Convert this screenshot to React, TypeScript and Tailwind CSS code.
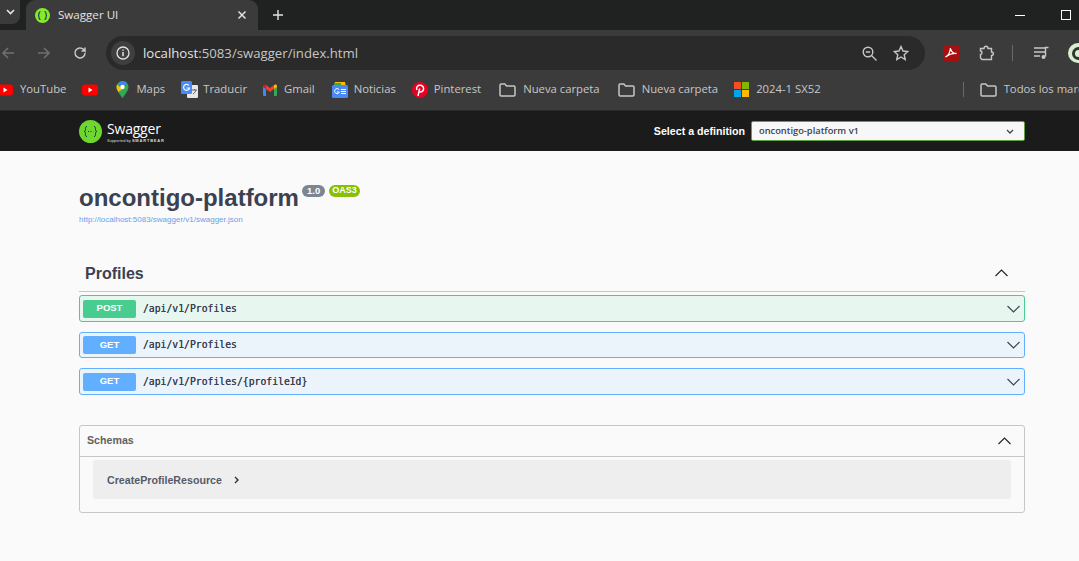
import React from "react";

const Folder = () => (
  <svg width="17" height="14" viewBox="0 0 17 14" fill="none" stroke="#c4c7c5" strokeWidth="1.5"><path d="M1 2.2c0-.7.5-1.2 1.2-1.2h3.6l1.8 2h7.2c.7 0 1.2.5 1.2 1.2v7.6c0 .7-.5 1.2-1.2 1.2H2.2c-.7 0-1.2-.5-1.2-1.2z" /></svg>
);

const YT = () => (
  <svg width="16" height="12" viewBox="0 0 16 12"><rect width="16" height="11" y="0.5" rx="3" fill="#f00" /><path d="M6.5 3.5v5l4-2.5z" fill="#fff" /></svg>
);

const Chevron = ({ up }: { up?: boolean }) => (
  <svg width="13" height="8" viewBox="0 0 13 8" fill="none" stroke={up ? "#222" : "#3b4151"} strokeWidth="1.1"><path d={up ? "M.5 7 6.5 1l6 6" : "M.5 1l6 6 6-6"} /></svg>
);

function Op({ method, path, tint, short }: { method: string; path: string; tint: "post" | "get"; short?: boolean }) {
  const post = tint === "post";
  return (
    <div className={`flex items-center rounded-[3px] border pl-[3px] pr-[4px] ${short ? "h-[26px]" : "h-[27px]"} ${post ? "border-[#49cc90] bg-[#e8f6f0]" : "border-[#61affe] bg-[#ebf3fb]"}`}>
      <div className={`flex h-[18px] w-[53px] items-center justify-center rounded-[2px] text-[9.5px] font-bold text-white ${post ? "bg-[#49cc90]" : "bg-[#61affe]"}`}>{method}</div>
      <div className="ml-[7px] flex-1 pt-[1px] font-['DejaVu_Sans_Mono',monospace] text-[9.75px] text-[#3b4151] [text-shadow:0_0_0.5px_#3b4151]">{path}</div>
      <Chevron />
    </div>
  );
}

const Mark = ({ ml, children }: { ml: string; children: React.ReactNode }) => (
  <div className={`flex shrink-0 items-center whitespace-nowrap ${ml}`}>{children}</div>
);

export default function App() {
  return (
    <div className="flex h-[561px] w-[1079px] flex-col overflow-hidden bg-[#fafafa] font-['Liberation_Sans',sans-serif]">
      {/* Tab strip */}
      <div className="flex h-[30px] shrink-0 items-center bg-[#202221] font-['Open_Sans',sans-serif]">
        <div className="flex h-[24px] w-[20px] items-center justify-center self-start rounded-br-[8px] bg-[#3b3b3b]">
          <svg width="9" height="6" viewBox="0 0 9 6" fill="none" stroke="#e3e3e3" strokeWidth="1.6"><path d="m1 1 3.500 3.500L8 1" /></svg>
        </div>
        <div className="ml-[6px] flex h-[30px] w-[232px] items-center rounded-t-[9px] bg-[#3b3b3b] pl-[9px] pr-[11px]">
          <svg width="15" height="15" viewBox="0 0 15 15" className="shrink-0"><circle cx="7.500" cy="7.500" r="7.500" fill="#85ea2d" /><path d="M5.500 3.500c-1.500 0-1.500 1-1.500 2s-.2 2-1 2c.8 0 1 1 1 2s0 2 1.500 2M9.500 3.500c1.500 0 1.500 1 1.500 2s.2 2 1 2c-.8 0-1 1-1 2s0 2-1.500 2" fill="none" stroke="#173647" strokeWidth="1.200" /></svg>
          <span className="ml-[8px] flex-1 text-[11.600px] text-[#e3e3e3]">Swagger UI</span>
          <svg width="10" height="10" viewBox="0 0 10 10" stroke="#e3e3e3" strokeWidth="1.500"><path d="m1.500 1.500 7 7m0-7-7 7" /></svg>
        </div>
        <svg width="12" height="12" viewBox="0 0 12 12" stroke="#e3e3e3" strokeWidth="1.400" className="ml-[14px]"><path d="M6 1v10M1 6h10" /></svg>
        <div className="ml-auto flex items-center">
          <div className="h-px w-[10px] bg-white" />
          <div className="ml-[36px] mr-[8px] h-[10px] w-[10px] border border-white" />
        </div>
      </div>

      {/* Toolbar */}
      <div className="flex h-[40px] shrink-0 items-start bg-[#3b3b3b] pt-[6px]">
        <div className="flex h-[34px] shrink-0 items-center">
          <svg width="14" height="14" viewBox="0 0 14 14" fill="none" stroke="#6f7170" strokeWidth="1.500" className="ml-[1px]"><path d="M13 7H2m5-5L2 7l5 5" /></svg>
          <svg width="14" height="14" viewBox="0 0 14 14" fill="none" stroke="#6f7170" strokeWidth="1.500" className="ml-[22px]"><path d="M1 7h11M7 2l5 5-5 5" /></svg>
          <svg width="14" height="14" viewBox="0 0 14 14" fill="none" stroke="#c7c7c7" strokeWidth="1.500" className="ml-[22px]"><path d="M12 7a5 5 0 1 1-1.500-3.600L12 5V1.500M12 5H8.500" /></svg>
        </div>
        <div className="ml-[19px] flex h-[34px] w-[819px] shrink-0 items-center rounded-full bg-[#2a2a2a] pr-[16px]">
          <div className="ml-[5px] flex h-[24px] w-[24px] items-center justify-center rounded-full bg-[#3f3f3f]">
            <svg width="14" height="14" viewBox="0 0 14 14" fill="none"><circle cx="7" cy="7" r="6" stroke="#e3e3e3" strokeWidth="1.300" /><path d="M7 6v4.200M7 3.500v1.300" stroke="#e3e3e3" strokeWidth="1.500" /></svg>
          </div>
          <span className="ml-[8px] flex-1 pt-[1px] font-['Open_Sans',sans-serif] text-[13.200px] text-[#e3e3e3]">localhost<span className="text-[#c4c7c5]">:5083/swagger/index.html</span></span>
          <svg width="15" height="15" viewBox="0 0 15 15" fill="none" stroke="#c7c7c7" strokeWidth="1.400"><circle cx="6" cy="6" r="4.800" /><path d="M3.800 6h4.400M9.500 9.500l5 5" /></svg>
          <svg width="16" height="16" viewBox="0 0 16 16" fill="none" stroke="#c7c7c7" strokeWidth="1.400" className="ml-[16px]"><path d="m8 1.500 2 4.500 4.800.5-3.600 3.200 1 4.800L8 12l-4.200 2.500 1-4.800L1.200 6.500 6 6z" /></svg>
        </div>
        <div className="flex h-[34px] shrink-0 items-center">
          <svg width="16" height="16" viewBox="0 0 16 16" className="ml-[18px]"><rect width="16" height="16" rx="2" fill="#a80f0f" /><path d="M2.500 12c2.500-1 4.500-4.500 5-9 .5 3.500 2.500 5.500 6 5.500-3.500-.5-7 .5-11 3.500z" fill="none" stroke="#fff" strokeWidth="1.300" /></svg>
          <svg width="16" height="16" viewBox="0 0 16 16" fill="none" stroke="#c7c7c7" strokeWidth="1.400" className="ml-[20px]"><path d="M1.500 3.500h3.500c0-3 4-3 4 0h3.500v3.500c2.500 0 2.500 3.500 0 3.500v4h-9.500l-1.500-1.500v-3.500c2 0 2-3.500 0-3.500z" /></svg>
          <div className="ml-[17px] h-[16px] w-px bg-[#6a6a6a]" />
          <svg width="16" height="14" viewBox="0 0 16 14" fill="none" stroke="#c7c7c7" strokeWidth="1.400" className="ml-[21px]"><path d="M0 2h11M0 6h11M0 10h6M14.500 1.500h-3v9" /><circle cx="9.500" cy="11" r="2" fill="#c7c7c7" stroke="none" /></svg>
          <div className="ml-[18px] flex h-[20px] w-[20px] shrink-0 items-center justify-center rounded-full bg-[#dcecd2]">
            <div className="h-[13px] w-[13px] rounded-full border-[3px] border-[#2a3a2a]" />
          </div>
        </div>
      </div>

      {/* Bookmarks */}
      <div className="flex h-[40px] shrink-0 items-center bg-[#3b3b3b] pb-[1px] font-['Open_Sans',sans-serif] text-[11.300px] text-[#c7c7c7]">
        <Mark ml="ml-[-3px]"><YT /><span className="ml-[7px]">YouTube</span></Mark>
        <Mark ml="ml-[16px]"><YT /></Mark>
        <Mark ml="ml-[18px]">
          <svg width="13" height="17" viewBox="0 0 13 17"><path d="M6.500 0A6 6 0 0 0 .5 6c0 4 6 11 6 11s6-7 6-11a6 6 0 0 0-6-6z" fill="#34a853" /><path d="M1 3.500 6.500 8l-4 3C1 9 .5 7.500.5 6c0-1 .2-1.700.5-2.500z" fill="#fbbc04" /><path d="M6.500 0c2 0 3.800 1 4.800 2.500L6.500 6 2 3A6 6 0 0 1 6.500 0z" fill="#4285f4" /><circle cx="6.500" cy="6" r="2.200" fill="#fff" /></svg>
          <span className="ml-[7px]">Maps</span>
        </Mark>
        <Mark ml="ml-[16px]">
          <svg width="17" height="17" viewBox="0 0 17 17"><rect x="6" y="4" width="11" height="13" rx="1" fill="#e8e8e8" /><rect width="11" height="13" rx="1.500" fill="#4a8af4" /><path d="M8 4.500a3 3 0 1 0 .5 2.500H5.500" fill="none" stroke="#fff" strokeWidth="1.200" /><path d="M11 9h5m-2.500-1v1m-1.500 4c1.500-1 2.500-2.500 3-4" fill="none" stroke="#666" /></svg>
          <span className="ml-[5px]">Traducir</span>
        </Mark>
        <Mark ml="ml-[16px]">
          <svg width="14" height="12" viewBox="0 0 14 12"><path d="M0 2v9a1 1 0 0 0 1 1h2V5z" fill="#4285f4" /><path d="M14 2v9a1 1 0 0 1-1 1h-2V5z" fill="#34a853" /><path d="M11 1v4l3-2V2c0-1.500-1.500-2-3-1z" fill="#fbbc04" /><path d="M3 5 7 8l4-3V1L7 4 3 1z" fill="#ea4335" /><path d="M0 2v1l3 2V1C1.500 0 0 .5 0 2z" fill="#c5221f" /></svg>
          <span className="ml-[7px]">Gmail</span>
        </Mark>
        <Mark ml="ml-[17px]">
          <svg width="16" height="16" viewBox="0 0 16 16"><path d="M3 0h10l1 5H2z" fill="#fbbc04" /><path d="M2 1h7v4H2z" fill="#34a853" /><rect y="3" width="16" height="13" rx="1.500" fill="#4a8af4" /><path d="M7 7.500a2.500 2.500 0 1 0 .4 2.500H5" fill="none" stroke="#fff" strokeWidth="1" /><path d="M9 7.500h5M9 9.500h5M9 11.500h5" stroke="#fff" strokeWidth="1" /></svg>
          <span className="ml-[6px]">Noticias</span>
        </Mark>
        <Mark ml="ml-[16px]">
          <svg width="16" height="16" viewBox="0 0 16 16"><circle cx="8" cy="8" r="8" fill="#e60023" /><path d="M6 14c.5-2 1-5 1.700-7.500M5 8C3.500 5 6 3 8.500 3.300c2.500.3 3.500 2.300 3 4.200-.5 2.200-3.300 3.300-4.300 1.700" fill="none" stroke="#fff" strokeWidth="1.500" /></svg>
          <span className="ml-[6px]">Pinterest</span>
        </Mark>
        <Mark ml="ml-[18px]"><Folder /><span className="ml-[7px]">Nueva carpeta</span></Mark>
        <Mark ml="ml-[18px]"><Folder /><span className="ml-[7px]">Nueva carpeta</span></Mark>
        <Mark ml="ml-[16px]">
          <svg width="15" height="15" viewBox="0 0 15 15"><rect width="7" height="7" fill="#f25022" /><rect x="8" width="7" height="7" fill="#7fba00" /><rect y="8" width="7" height="7" fill="#00a4ef" /><rect x="8" y="8" width="7" height="7" fill="#ffb900" /></svg>
          <span className="ml-[7px]">2024-1 SX52</span>
        </Mark>
        <div className="ml-[142px] h-[15px] w-px shrink-0 bg-[#6a6a6a]" />
        <Mark ml="ml-[16px]"><Folder /><span className="ml-[7px]">Todos los marcadores</span></Mark>
      </div>

      <div className="h-px shrink-0 bg-[#2a2a2a]" />

      {/* Swagger top bar */}
      <div className="flex h-[40px] shrink-0 items-center bg-[#1b1b1b] pl-[79px] pr-[54px]">
        <svg width="23" height="23" viewBox="0 0 23 23" className="shrink-0"><circle cx="11.500" cy="11.500" r="11.500" fill="#6fd62e" /><path d="M8 6.500c-1.800 0-1.500 1.500-1.500 2.700S6.200 11.500 5 11.500c1.200 0 1.500 1 1.500 2.300S6.200 16.500 8 16.500M15 6.500c1.800 0 1.500 1.500 1.500 2.700s.3 2.300 1.500 2.300c-1.200 0-1.500 1-1.500 2.300s.3 2.700-1.500 2.700" fill="none" stroke="#173647" strokeWidth="1" /><path d="M9 11.500h1m1.500 0h1m1.500 0h.1" stroke="#173647" strokeWidth="1.100" /></svg>
        <div className="ml-[5px] flex flex-col justify-center">
          <span className="font-['Open_Sans',sans-serif] text-[14px] leading-[17px] tracking-[-0.2px] text-white">Swagger</span>
          <span className="mt-[1px] text-[4px] leading-[5px] text-[#d8d8d8]">Supported by <span className="font-bold tracking-[0.8px]">SMARTBEAR</span></span>
        </div>
        <span className="ml-auto text-[10.670px] font-bold text-white">Select a definition</span>
        <div className="ml-[6px] flex h-[20px] w-[274px] items-center justify-between rounded-[2px] border border-[#62a03f] bg-[#f7f7f7] pl-[7px] pr-[10px] font-['Open_Sans',sans-serif] text-[9.300px] font-semibold text-[#3b4151]">
          <span>oncontigo-platform v1</span>
          <svg width="8" height="5" viewBox="0 0 8 5" fill="none" stroke="#444" strokeWidth="1.300"><path d="m1 1 3 3 3-3" /></svg>
        </div>
      </div>

      {/* Main */}
      <div className="flex flex-col px-[54px] pl-[79px]">
        <div className="mt-[31px] flex items-start">
          <h1 className="text-[24px] font-bold leading-[32px] text-[#3b4151]">oncontigo-platform</h1>
          <span className="ml-[3px] mt-[3px] flex h-[12px] items-center rounded-full bg-[#7d8492] px-[5px] text-[9.500px] font-bold text-white">1.0</span>
          <span className="ml-[4px] mt-[3px] flex h-[12px] items-center rounded-full bg-[#89bf04] px-[3px] text-[9px] font-bold text-white">OAS3</span>
        </div>
        <a className="mt-[1px] text-[8px] leading-[10px] text-[#6a9fe8]">http://localhost:5083/swagger/v1/swagger.json</a>

        <div className="mt-[30px] flex h-[37px] items-center justify-between border-b border-[#c6c6c6] pl-[6px] pr-[17px]">
          <span className="pt-[1px] text-[16px] font-bold text-[#3b4151]">Profiles</span>
          <Chevron up />
        </div>
        <div className="mt-[3px] flex flex-col gap-[10px]">
          <Op method="POST" path="/api/v1/Profiles" tint="post" />
          <Op method="GET" path="/api/v1/Profiles" tint="get" short />
          <Op method="GET" path="/api/v1/Profiles/{profileId}" tint="get" />
        </div>

        <div className="mt-[30px] flex h-[88px] flex-col rounded-[3px] border border-[#c6c6c6]">
          <div className="flex h-[31px] shrink-0 items-center justify-between border-b border-[#c6c6c6] pl-[7px] pr-[13px]">
            <span className="pb-[3px] text-[10.670px] font-bold text-[#606060]">Schemas</span>
            <Chevron up />
          </div>
          <div className="mx-[13px] mt-[3px] flex h-[39px] items-center rounded-[3px] bg-[#eeeeee] pl-[14px]">
            <span className="text-[10.670px] font-bold text-[#555b6a]">CreateProfileResource</span>
            <svg width="5" height="8" viewBox="0 0 5 8" fill="none" stroke="#303030" strokeWidth="1.400" className="ml-[12px]"><path d="m1 1 3 3-3 3" /></svg>
          </div>
        </div>
      </div>
    </div>
  );
}
